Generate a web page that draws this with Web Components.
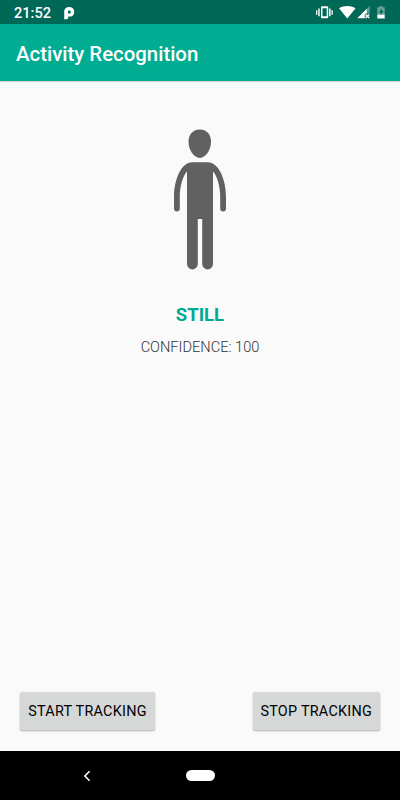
<!DOCTYPE html>
<html lang="en">
<head>
<meta charset="UTF-8">
<meta name="viewport" content="width=device-width, initial-scale=1.0">
<title>Activity Recognition</title>
<style>
    body {
        margin: 0;
        height: 100vh;
        overflow: hidden;
        background: #fafafa;
        font-family: Roboto, "Liberation Sans", sans-serif;
    }
</style>
</head>
<body>
<activity-app>
    <status-bar slot="top" time="21:52"></status-bar>
    <app-bar slot="top">Activity Recognition</app-bar>
    <activity-view confidence="100">STILL</activity-view>
    <track-button slot="actions" style="--button-width: 135px">START TRACKING</track-button>
    <track-button slot="actions" style="--button-width: 127.500px">STOP TRACKING</track-button>
    <nav-bar slot="bottom"></nav-bar>
</activity-app>

<script>
class ActivityApp extends HTMLElement {
    constructor() {
        super();
        this.attachShadow({ mode: 'open' });
    }

    connectedCallback() {
        this.shadowRoot.innerHTML = `
            <style>
                :host {
                    display: flex;
                    flex-direction: column;
                    height: 100%;
                }
                main {
                    flex: 1;
                }
                .actions {
                    display: flex;
                    justify-content: space-between;
                    padding: 0 20px 21px;
                }
            </style>
            <slot name="top"></slot>
            <main><slot></slot></main>
            <div class="actions"><slot name="actions"></slot></div>
            <slot name="bottom"></slot>
        `;
    }
}

class StatusBar extends HTMLElement {
    constructor() {
        super();
        this.attachShadow({ mode: 'open' });
    }

    connectedCallback() {
        this.shadowRoot.innerHTML = `
            <style>
                :host {
                    display: flex;
                    justify-content: space-between;
                    flex: none;
                    height: 24px;
                    background: #006856;
                    color: #fff;
                }
                .left {
                    display: flex;
                    align-items: center;
                    gap: 13px;
                    padding: 2px 0 0 14px;
                    font-size: 14.6px;
                    font-weight: 500;
                    line-height: 22px;
                }
                svg {
                    display: block;
                    fill: #fff;
                }
            </style>
            <div class="left">
                <span>${this.getAttribute('time')}</span>
                <svg width="11" height="13" viewBox="0 0 11 13">
                    <path d="M.2 5C.2 1.800 2.400 0 5.200 0 8.200 0 10.200 1.900 10.200 4.900 10.200 7.900 8.200 9.600 5.500 9.600H4.300V10.200C4.300 11.400 3.500 12.200 2.300 12.200H.2ZM4 6.500H5.400C6.300 6.500 6.800 5.900 6.800 5 6.800 4.100 6.200 3.500 5.400 3.500 4.500 3.500 4 4.100 4 5Z" fill-rule="evenodd"/>
                </svg>
            </div>
            <svg width="90" height="24" viewBox="310 0 90 24">
                <!-- vibrate -->
                <path d="M316 10.200h1.300v4.600H316zM318.200 8.500h1.500v7.700h-1.500zM329.100 8.500h1.500v7.700h-1.500zM331.500 10.200h1.300v4.600h-1.300z"/>
                <path d="M322 6.200h5.200a1 1 0 0 1 1 1v10a1 1 0 0 1-1 1H322a1 1 0 0 1-1-1v-10a1 1 0 0 1 1-1zM322.500 8.200v8h4.200v-8z" fill-rule="evenodd"/>
                <!-- wifi -->
                <path d="M339 8.300C343.800 5.100 350.600 5.100 355.600 8.300L347.300 18.500Z"/>
                <!-- mobile signal -->
                <path d="M369.800 5.800v7.700h-4V18h-8z" opacity=".35"/>
                <path d="M366.800 8.700v4.900h-2.100V18.200h-7.500z"/>
                <path d="M365.700 14.400l3.600 3.600m0-3.600l-3.600 3.600" stroke="#fff" stroke-width="1.300" fill="none"/>
                <!-- battery -->
                <path d="M379.700 6h2.800v1.200h2.200v7.800h-7.400v-7.800h2.400z" opacity=".4"/>
                <path d="M377.300 14.700h7.400v3.800h-7.400z"/>
                <path d="M381.900 8.300l-3.100 4.200h1.900v2.800l2.900-4.400h-1.700z" fill="#006856"/>
            </svg>
        `;
    }
}

class AppBar extends HTMLElement {
    constructor() {
        super();
        this.attachShadow({ mode: 'open' });
    }

    connectedCallback() {
        this.shadowRoot.innerHTML = `
            <style>
                :host {
                    display: flex;
                    align-items: center;
                    flex: none;
                    box-sizing: border-box;
                    height: 57px;
                    padding: 3px 16px 0;
                    background: #00ad93;
                    color: #fff;
                    font-size: 20.4px;
                    font-weight: 500;
                    box-shadow: 0 1px 1px rgba(0, 0, 0, 0.15);
                }
            </style>
            <slot></slot>
        `;
    }
}

class ActivityView extends HTMLElement {
    constructor() {
        super();
        this.attachShadow({ mode: 'open' });
    }

    connectedCallback() {
        this.shadowRoot.innerHTML = `
            <style>
                :host {
                    display: flex;
                    flex-direction: column;
                    align-items: center;
                    padding-top: 39px;
                }
                svg {
                    fill: #616161;
                }
                .label {
                    margin-top: 23px;
                    color: #00a98f;
                    font-size: 18.5px;
                    font-weight: 700;
                    line-height: 24px;
                }
                .confidence {
                    margin-top: 10px;
                    color: #333;
                    font-size: 14.6px;
                    font-weight: 300;
                    line-height: 20px;
                }
            </style>
            <svg width="80" height="160" viewBox="0 0 80 160">
                <path d="M39.800 9.600C46.500 9.600 51 14.400 51 21.800 51 30.300 45.500 38 39.800 38 34.100 38 28.500 30.300 28.500 21.800 28.500 14.400 33.100 9.600 39.800 9.600Z"/>
                <path d="M32.500 42.300H47.500C59.500 42.300 66 61 66 77V88.500A2.900 2.900 0 0 1 60.200 88.500V77C60.200 66 57 55.500 53 51.500V144A5.400 5.400 0 0 1 42.200 144V99H37.800V144A5.400 5.400 0 0 1 27 144V51.500C23 55.500 19.800 66 19.800 77V88.500A2.900 2.900 0 0 1 14 88.500V77C14 61 20.500 42.300 32.500 42.300Z"/>
            </svg>
            <div class="label"><slot></slot></div>
            <div class="confidence">CONFIDENCE: ${this.getAttribute('confidence')}</div>
        `;
    }
}

class TrackButton extends HTMLElement {
    constructor() {
        super();
        this.attachShadow({ mode: 'open' });
    }

    connectedCallback() {
        this.shadowRoot.innerHTML = `
            <style>
                :host {
                    display: block;
                    width: var(--button-width);
                }
                button {
                    width: 100%;
                    height: 38px;
                    padding: 0;
                    border: 0;
                    border-radius: 2px;
                    background: #d6d8d7;
                    box-shadow: 0 1px 2px rgba(0, 0, 0, 0.3);
                    color: #000;
                    font: 400 14.4px Roboto, "Liberation Sans", sans-serif;
                    letter-spacing: 0.25px;
                    white-space: nowrap;
                }
            </style>
            <button><slot></slot></button>
        `;
    }
}

class NavBar extends HTMLElement {
    constructor() {
        super();
        this.attachShadow({ mode: 'open' });
    }

    connectedCallback() {
        this.shadowRoot.innerHTML = `
            <style>
                :host {
                    display: grid;
                    grid-template-columns: 1fr 29px 1fr;
                    align-items: center;
                    flex: none;
                    height: 49px;
                    background: #000;
                }
                svg {
                    margin-left: 82px;
                }
                .home {
                    height: 11px;
                    border-radius: 6px;
                    background: #fff;
                }
            </style>
            <svg width="10" height="12" viewBox="0 0 10 12">
                <path d="M7.600 1.300L2.900 6l4.700 4.700" fill="none" stroke="#fff" stroke-width="1.600"/>
            </svg>
            <div class="home"></div>
        `;
    }
}

customElements.define('activity-app', ActivityApp);
customElements.define('status-bar', StatusBar);
customElements.define('app-bar', AppBar);
customElements.define('activity-view', ActivityView);
customElements.define('track-button', TrackButton);
customElements.define('nav-bar', NavBar);
</script>
</body>
</html>
